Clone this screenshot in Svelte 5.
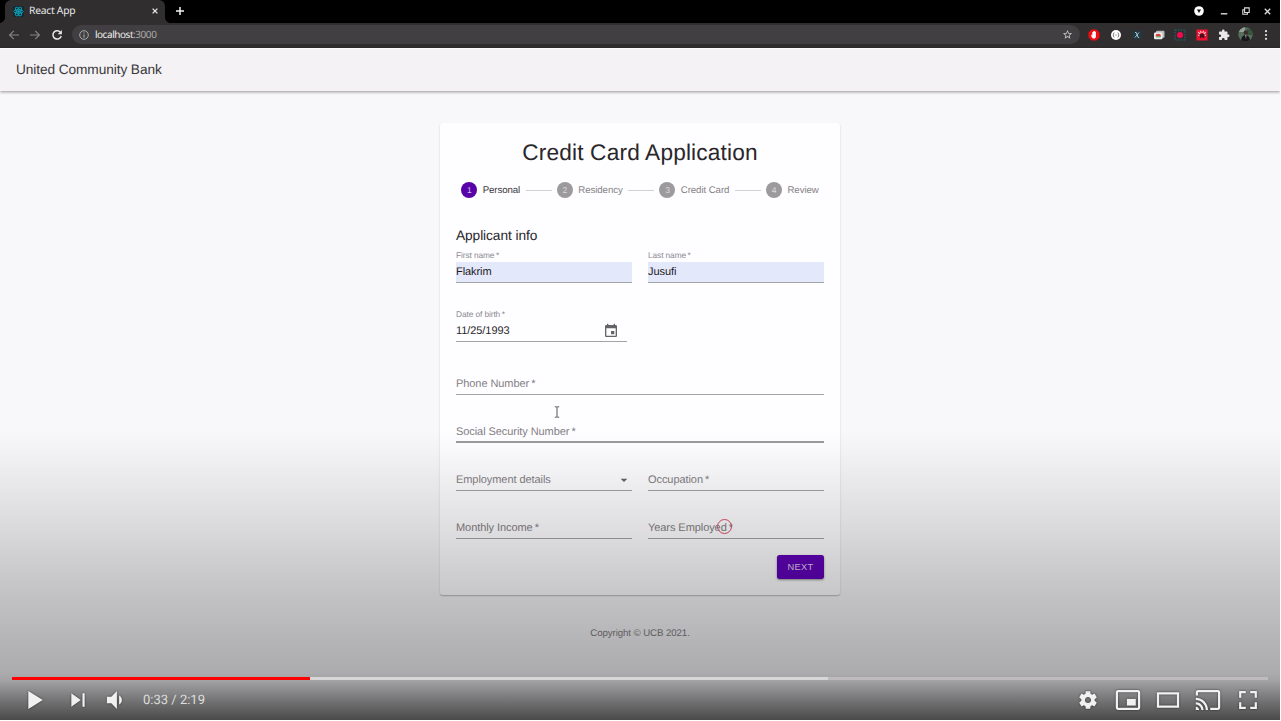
<script>
  const steps = ['Personal', 'Residency', 'Credit Card', 'Review'];
</script>

{#snippet field(label, value = '', cls = '')}
  <div class="field {cls}" class:filled={value}>
    <span class="label">{label.replace(' *', '\u2009*')}</span>
    {#if value}<span class="value">{value}</span>{/if}
    {#if cls === 'date'}
      <svg class="cal" viewBox="0 0 24 24"><path d="M17 12h-5v5h5v-5zM16 1v2H8V1H6v2H5c-1.11 0-1.99.9-1.99 2L3 19c0 1.1.89 2 2 2h14c1.1 0 2-.9 2-2V5c0-1.1-.9-2-2-2h-1V1h-2zm3 18H5V8h14v11z" /></svg>
    {/if}
    {#if cls === 'select'}
      <svg class="caret" viewBox="0 0 24 24"><path d="M7 10l5 5 5-5z" /></svg>
    {/if}
  </div>
{/snippet}

<div class="player">
  <div class="tabs">
    <div class="tab">
      <svg class="react" viewBox="0 0 24 24" fill="none" stroke="#0da0b8" stroke-width="2">
        <rect width="24" height="24" rx="3" fill="#142a30" stroke="none" />
        <ellipse cx="12" cy="12" rx="10.5" ry="4.2" />
        <ellipse cx="12" cy="12" rx="10.5" ry="4.2" transform="rotate(60 12 12)" />
        <ellipse cx="12" cy="12" rx="10.5" ry="4.2" transform="rotate(120 12 12)" />
        <circle cx="12" cy="12" r="2" fill="#0da0b8" />
      </svg>
      <span>React App</span>
      <svg class="x" viewBox="0 0 6 6"><path d="M.6.6l4.8 4.8M5.4.6L.6 5.4" stroke="#e8e8e8" stroke-width="1.3" /></svg>
    </div>
    <svg class="plus" viewBox="0 0 8 8"><path d="M4 0v8M0 4h8" stroke="#f2f2f2" stroke-width="1.5" /></svg>
    <div class="window">
      <svg width="10" height="10" viewBox="0 0 10 10"><circle cx="5" cy="5" r="4.8" fill="#fff" /><path d="M2.9 3.6h4.2L5 7z" fill="#111" /></svg>
      <svg width="8" height="10" viewBox="0 0 8 10"><path d="M.8 7.8h6.5" stroke="#ddd" stroke-width="1.4" /></svg>
      <svg width="8" height="8" viewBox="0 0 8 8" fill="none" stroke="#ddd" stroke-width="1.1"><path d="M2.6.9h4.6v4.6H2.6zM2.6 2.8H.8v4.4h4.6V5.5" /></svg>
      <svg width="7" height="7" viewBox="0 0 7 7"><path d="M.8.8l5.4 5.4M6.2.8L.8 6.2" stroke="#ddd" stroke-width="1.3" /></svg>
    </div>
  </div>

  <div class="toolbar">
    <svg class="nav" viewBox="0 0 12 12" stroke="#858385"><path d="M11 6H1.8M5.8 1.8L1.6 6l4.2 4.2" /></svg>
    <svg class="nav" viewBox="0 0 12 12" stroke="#858385"><path d="M1 6h9.2M6.2 1.8L10.4 6l-4.2 4.2" /></svg>
    <svg class="nav" viewBox="0 0 12 12" stroke="#e6e6e6"><path d="M9.8 3.8A4.2 4.2 0 1 0 10.2 7" stroke-width="1.5" /><path d="M10.9 1v4.2H6.7z" fill="#e6e6e6" stroke="none" /></svg>
    <div class="url">
      <svg width="10" height="10" viewBox="0 0 10 10" fill="none" stroke="#aaa"><circle cx="5" cy="5" r="4.3" /><path d="M5 4.4v3.1M5 2.4v1.1" stroke-width="1.1" /></svg>
      <span class="host">localhost<i>:3000</i></span>
      <svg class="star" viewBox="0 0 24 24"><path d="M22 9.24l-7.19-.62L12 2 9.19 8.63 2 9.24l5.46 4.73L5.82 21 12 17.27 18.18 21l-1.63-7.03L22 9.24zM12 15.4l-3.76 2.27 1-4.28-3.32-2.88 4.38-.38L12 6.1l1.71 4.04 4.38.38-3.32 2.88 1 4.28L12 15.4z" /></svg>
    </div>
    <div class="exts">
      <svg viewBox="0 0 12 12"><path d="M3.6.5h4.8l3.1 3.1v4.8l-3.1 3.1H3.6L.5 8.4V3.6z" fill="#f20d12" /><path d="M3.300 5.400l1 .8V3h.9v-.7h.9V2h.9v.7h.9v4.200c0 1.700-.8 2.700-2 2.700-1.300 0-1.900-.9-2.600-2.400z" fill="#fff" /></svg>
      <svg viewBox="0 0 12 12"><circle cx="6" cy="6" r="5" fill="#fff" /><path d="M4.400 3.600Q3.400 3.600 3.600 5 3.600 6 2.800 6 3.600 6 3.600 7 3.400 8.400 4.400 8.400M7.600 3.600Q8.600 3.600 8.400 5 8.400 6 9.200 6 8.400 6 8.400 7 8.600 8.400 7.600 8.400M5.300 6h1.400" stroke="#666" stroke-width=".8" fill="none" /></svg>
      <svg viewBox="0 0 12 12"><rect x="1.500" y="2" width="9" height="8" fill="#203744" /><path d="M4 3.500h1.200L7.200 8.500h1M8 3.500L4 8.500" stroke="#b7d2da" stroke-width=".9" fill="none" /></svg>
      <svg viewBox="0 0 12 12"><rect x="3" y="1.800" width="8.500" height="7" rx="1" fill="#b9bcbc" /><rect x="1" y="3.600" width="8.500" height="6.700" rx="1" fill="#eee" /><path d="M2.500 7.200a2.600 2.400 0 0 1 5.400 0z" fill="#dc3c33" /><path d="M3.200 7.200h4.500v1.200H3.200z" fill="#5c9c63" /></svg>
      <svg viewBox="0 0 12 12"><rect x="1" y="1" width="10" height="10" fill="none" stroke="#1a7070" stroke-dasharray="1.500 1.300" /><circle cx="6" cy="6" r="3" fill="#f5084d" /></svg>
      <svg viewBox="0 0 12 12"><rect x=".5" y=".5" width="11" height="11" fill="#f01232" /><path d="M2.300 3.200l1.800 1.600M4.500 1.800l.7 2.200M7.500 1.800l-.7 2.200M9.700 3.200L8 4.800M2 6.200h2M10 6.200H8" stroke="#ffd5da" stroke-width="1.100" /><path d="M3.500 5.500L6 4.500l2.700 1.300L8 9.500 6 8.300 4 9.500z" fill="#45101c" /></svg>
      <svg viewBox="0 0 24 24"><path fill="#e8e8e8" d="M20.500 11H19V7c0-1.100-.9-2-2-2h-4V3.500a2.500 2.500 0 0 0-5 0V5H4c-1.100 0-2 .9-2 2v3.800h1.500a2.700 2.700 0 0 1 0 5.400H2V20c0 1.100.9 2 2 2h3.800v-1.500a2.700 2.700 0 0 1 5.400 0V22H17c1.100 0 2-.9 2-2v-4h1.500a2.500 2.500 0 0 0 0-5z" /></svg>
      <svg class="avatar" viewBox="0 0 15 15"><defs><clipPath id="face"><circle cx="7.500" cy="7.500" r="7.200" /></clipPath></defs><g clip-path="url(#face)"><rect width="15" height="15" fill="#55705a" /><path d="M0 0h7v5H0z" fill="#91a09a" /><path d="M9 2h6v6H9z" fill="#385440" /><path d="M3 15c0-5 2-7 4.500-7s4.500 2 4.500 7z" fill="#19151d" /><circle cx="7.800" cy="5.500" r="2.200" fill="#3e2c2c" /><path d="M7 8h1.500l-.5 4z" fill="#a99ba2" /></g></svg>
      <svg viewBox="0 0 12 12" fill="#e8e8e8"><circle cx="5" cy="2.200" r="1.100" /><circle cx="5" cy="6" r="1.100" /><circle cx="5" cy="9.800" r="1.100" /></svg>
    </div>
  </div>

  <header>United Community Bank</header>

  <main>
    <section class="card">
      <h1>Credit Card Application</h1>
      <div class="stepper">
        {#each steps as step, i}
          {#if i}<div class="connector"></div>{/if}
          <div class="step" class:active={i === 0}><b>{i + 1}</b><span>{step}</span></div>
        {/each}
      </div>
      <h2>Applicant info</h2>
      <div class="row first">
        {@render field('First name *', 'Flakrim', 'auto')}
        {@render field('Last name *', 'Jusufi', 'auto')}
      </div>
      <div class="row dob">{@render field('Date of birth *', '11/25/1993', 'date')}</div>
      <div class="row phone">{@render field('Phone Number *')}</div>
      <div class="row">{@render field('Social Security Number *', '', 'hover')}</div>
      <div class="row">
        {@render field('Employment details', '', 'select')}
        {@render field('Occupation *')}
      </div>
      <div class="row">
        {@render field('Monthly Income *')}
        {@render field('Years Employed *')}
      </div>
      <button>NEXT</button>
    </section>
    <footer>Copyright © UCB 2021.</footer>
  </main>

  <svg class="ibeam" viewBox="0 0 6 12" fill="none" stroke="#555"><path d="M.8.8h1.500L3 1.300l.7-.5h1.500M3 1.300v9.400M.8 11.200h1.500l.7-.5.7.5h1.500" /></svg>
  <div class="click"></div>

  <div class="shade"></div>
  <div class="controls">
    <div class="progress"><div class="loaded"></div><div class="played"></div></div>
    <div class="bar">
      <svg class="play" viewBox="0 0 36 36"><path d="M12 26L25 18 12 10z" /></svg>
      <svg viewBox="0 0 36 36"><path d="M12 24l8.500-6L12 12v12zM22 12v12h2V12h-2z" /></svg>
      <svg viewBox="0 0 36 36"><path d="M8 21h4l5 5V10l-5 5H8v6zM19 14v8c1.480-.68 2.500-2.230 2.500-4 0-1.740-1.020-3.260-2.500-4z" /></svg>
      <span class="time">0:33 / 2:19</span>
      <svg viewBox="0 0 36 36"><path d="m23.940 18.780c.03-.25.05-.51.05-.78 0-.27-.02-.52-.05-.78l1.680-1.320c.15-.12.19-.33.09-.51l-1.600-2.760c-.09-.17-.31-.24-.48-.17l-1.990.8c-.41-.32-.86-.58-1.350-.78l-.30-2.120c-.02-.19-.19-.33-.39-.33h-3.200c-.2 0-.36.14-.39.33l-.30 2.120c-.48.2-.93.47-1.350.78l-1.990-.8c-.18-.07-.39 0-.48.17l-1.600 2.760c-.10.17-.05.39.09.51l1.680 1.320c-.03.25-.05.52-.05.78 0 .26.02.52.05.78l-1.680 1.320c-.15.12-.19.33-.09.51l1.600 2.760c.09.17.31.24.48.17l1.990-.8c.41.32.86.58 1.350.78l.30 2.120c.02.19.19.33.39.33h3.200c.2 0 .36-.14.39-.33l.30-2.120c.48-.2.93-.47 1.350-.78l1.990.8c.18.07.39 0 .48-.17l1.600-2.760c.09-.17.05-.39-.09-.51l-1.680-1.320zm-5.940 2.010c-1.540 0-2.800-1.250-2.800-2.800 0-1.540 1.250-2.800 2.800-2.800 1.540 0 2.800 1.250 2.800 2.800 0 1.540-1.250 2.800-2.800 2.800z" /></svg>
      <svg viewBox="0 0 36 36"><path fill-rule="evenodd" d="M29 25V10.980C29 9.880 28.100 9 27 9H9C7.900 9 7 9.880 7 10.980V25c0 1.100.9 2 2 2h18c1.100 0 2-.9 2-2zM27 25.020H9V10.970h18v14.050z" /><path d="M17 17h8v6h-8z" /></svg>
      <svg viewBox="0 0 36 36"><path fill-rule="evenodd" d="M28 11v14H8V11zM10 13h16v10H10z" /></svg>
      <svg viewBox="0 0 36 36"><path d="M27 9H9c-1.100 0-2 .9-2 2v3h2v-3h18v14h-7v2h7c1.100 0 2-.9 2-2V11c0-1.100-.9-2-2-2zM7 24v3h3c0-1.660-1.340-3-3-3zM7 20v2c2.760 0 5 2.240 5 5h2c0-3.870-3.130-7-7-7zM7 16v2c4.970 0 9 4.030 9 9h2c0-6.080-4.930-11-11-11z" /></svg>
      <svg viewBox="0 0 36 36"><path d="M10 16h2v-4h4v-2h-6zM20 10v2h4v4h2v-6zM24 24h-4v2h6v-6h-2zM12 20h-2v6h6v-2h-4z" /></svg>
    </div>
  </div>
</div>

<style>
  :global(body) { background: #fff; overflow: hidden; }
  .player { position: relative; width: 1280px; height: 720px; overflow: hidden; background: #f8f7fa; display: flex; flex-direction: column; font-family: 'Liberation Sans', Arial, sans-serif; text-rendering: geometricPrecision; }
  svg { display: block; flex: none; }

  .tabs { height: 23px; background: #000; display: flex; align-items: center; flex: none; padding-right: 9px; }
  .tab { position: relative; width: 160px; height: 23px; margin-left: 5px; box-sizing: border-box; padding: 0 7px 1px 8px; background: #302e2f; border-radius: 6px 6px 0 0; display: flex; align-items: center; color: #e9e9e9; font: 10.300px/14px 'Noto Sans', sans-serif; letter-spacing: -.25px; }
  .tab::before, .tab::after { content: ''; position: absolute; bottom: 0; width: 5px; height: 5px; }
  .tab::before { left: -5px; background: radial-gradient(circle at 0 0, #000 4.500px, #302e2f 5px); }
  .tab::after { right: -5px; background: radial-gradient(circle at 100% 0, #000 4.500px, #302e2f 5px); }
  .tab span { flex: 1; margin-left: 5px; }
  .react { width: 11px; height: 11px; }
  .x { width: 6px; height: 6px; }
  .plus { width: 8px; height: 8px; margin: 0 0 1px 11px; }
  .window { margin-left: auto; display: flex; align-items: center; padding-bottom: 1px; }
  .window svg:nth-child(2) { margin-left: 16px; }
  .window svg:nth-child(3) { margin-left: 14px; }
  .window svg:nth-child(4) { margin-left: 14px; }

  .toolbar { height: 25px; flex: none; background: #302e2f; display: flex; align-items: center; padding: 0 8px 2px; box-sizing: border-box; }
  .nav { width: 12px; height: 12px; fill: none; stroke-width: 1.2; margin: 0 9.300px 0 0; }
  .url { width: 1008px; height: 19px; border-radius: 10px; background: #413f41; display: flex; align-items: center; padding: 0 7px; box-sizing: border-box; }
  .host { margin-left: 6px; flex: 1; font: 10px 'Noto Sans', sans-serif; padding-bottom: 1px; color: #eee; letter-spacing: -.45px; }
  .host i { font-style: normal; color: #aaa; }
  .star { width: 11px; height: 11px; fill: #ccc; }
  .exts { display: flex; align-items: center; justify-content: space-between; flex: 1; margin-left: 9px; }
  .exts svg { width: 12px; height: 12px; margin: 0 -1px; }
  .exts .avatar { width: 15px; height: 15px; margin: 0 -2.500px; }

  header { height: 43px; flex: none; background: #f4f2f4; border-top: 1px solid #fcfafc; box-sizing: border-box; padding-left: 16px; line-height: 42px; font-size: 13.700px; letter-spacing: -.09px; color: #39373a; box-shadow: 0 1px 3px rgba(0,0,0,.22), 0 1px 3px rgba(0,0,0,.2); }

  main { flex: 1; padding-top: 32px; display: flex; flex-direction: column; align-items: center; }
  .card { width: 400px; height: 472px; box-sizing: border-box; padding: 15px 16px 0; background: #fefdff; border-radius: 2.700px; box-shadow: 0 1px 1px rgba(0,0,0,.12), 0 1px 2px rgba(0,0,0,.16); display: flex; flex-direction: column; }
  h1 { margin: 0; font-size: 22.667px; line-height: 28px; font-weight: 400; letter-spacing: .167px; text-align: center; color: #29272a; }
  .stepper { display: flex; align-items: center; height: 16px; padding: 16px 0 27px; }
  .step { display: flex; align-items: center; padding: 0 5.330px; font-size: 9.700px; letter-spacing: -.09px; color: #858386; }
  .step span { padding-left: 5.330px; }
  .step b { width: 16px; height: 16px; border-radius: 50%; background: #9c9a9c; color: #dcdadc; font-weight: 400; font-size: 8.500px; line-height: 16px; text-align: center; }
  .active { color: #39373a; }
  .active b { background: #5703a8; color: #d8c0f0; }
  .connector { flex: 1; height: 1px; background: #d3cfd2; }
  h2 { margin: 0; font-size: 13.700px; font-weight: 400; line-height: 21px; letter-spacing: -.07px; color: #29272a; }

  .row { display: flex; gap: 16px; height: 32px; margin-bottom: 16px; flex: none; }
  .row.first { margin-top: 4px; margin-bottom: 26px; height: 33px; }
  .row.dob { width: 171px; height: 33px; margin-bottom: 21px; }
  .field { flex: 1; box-sizing: border-box; border-bottom: 1px solid #a5a3a6; display: flex; flex-direction: column; justify-content: flex-end; font-size: 11px; letter-spacing: -.07px; color: #828084; position: relative; }
  .field .label { line-height: 13px; padding-bottom: 3px; }
  .field.filled { justify-content: space-between; }
  .field.filled .label { font-size: 8.300px; line-height: 10px; padding: 0; letter-spacing: -.08px; color: #8d8b8f; }
  .filled .value { color: #29272a; line-height: 20px; height: 20px; }
  .auto .value { background: #e4e8fb; color: #1c1a22; }
  .field.hover { border-bottom: 2px solid #9c9a9d; }
  .field.hover .label { padding-bottom: 2px; }
  .cal, .caret { position: absolute; width: 16px; height: 16px; fill: #656367; }
  .cal { right: 8px; bottom: 2px; }
  .caret { right: 0; bottom: 2px; }
  button { align-self: flex-end; flex: none; width: 47px; height: 24px; border: 0; padding: 0; border-radius: 2.700px; background: #6002b8; color: #e0ccf2; font: 9.333px 'Liberation Sans', Arial, sans-serif; letter-spacing: .3px; box-shadow: 0 1px 2px rgba(0,0,0,.3), 0 1px 3px rgba(0,0,0,.15); }
  footer { margin-top: 32px; line-height: 14px; font-size: 9.700px; letter-spacing: -.09px; color: #817f82; }

  .ibeam { position: absolute; left: 554px; top: 406px; width: 6px; height: 12px; }
  .click { position: absolute; left: 717px; top: 519px; width: 13px; height: 13px; border: 1px solid #df4966; border-radius: 50%; }

  .shade { position: absolute; left: 0; right: 0; bottom: 0; height: 290px; background: linear-gradient(to bottom, rgba(0,0,0,0) 0, rgba(0,0,0,.01) 12px, rgba(0,0,0,.085) 70px, rgba(0,0,0,.125) 100px, rgba(0,0,0,.17) 130px, rgba(0,0,0,.222) 170px, rgba(0,0,0,.27) 210px, rgba(0,0,0,.305) 242px, rgba(0,0,0,.34) 250px, rgba(0,0,0,.53) 270px, rgba(0,0,0,.70) 290px); }
  .controls { position: absolute; left: 0; right: 0; bottom: 0; height: 43px; }
  .progress { height: 3px; margin: 0 12px; background: #bdbbbd; display: grid; }
  .progress div { grid-area: 1 / 1; height: 3px; }
  .loaded { width: 816px; background: #d8d7d8; }
  .played { width: 298px; background: #f00; }
  .bar { height: 40px; padding: 0 12px; display: flex; align-items: center; }
  .bar svg { width: 40px; height: 40px; fill: #f1f1f1; filter: drop-shadow(0 0 1px rgba(0,0,0,.55)); }
  .bar .play { margin: 0 3px; }
  .time { flex: 1; margin-left: 5px; font: 13px/16px Roboto, sans-serif; padding-top: 2px; color: #ddd; }
</style>
